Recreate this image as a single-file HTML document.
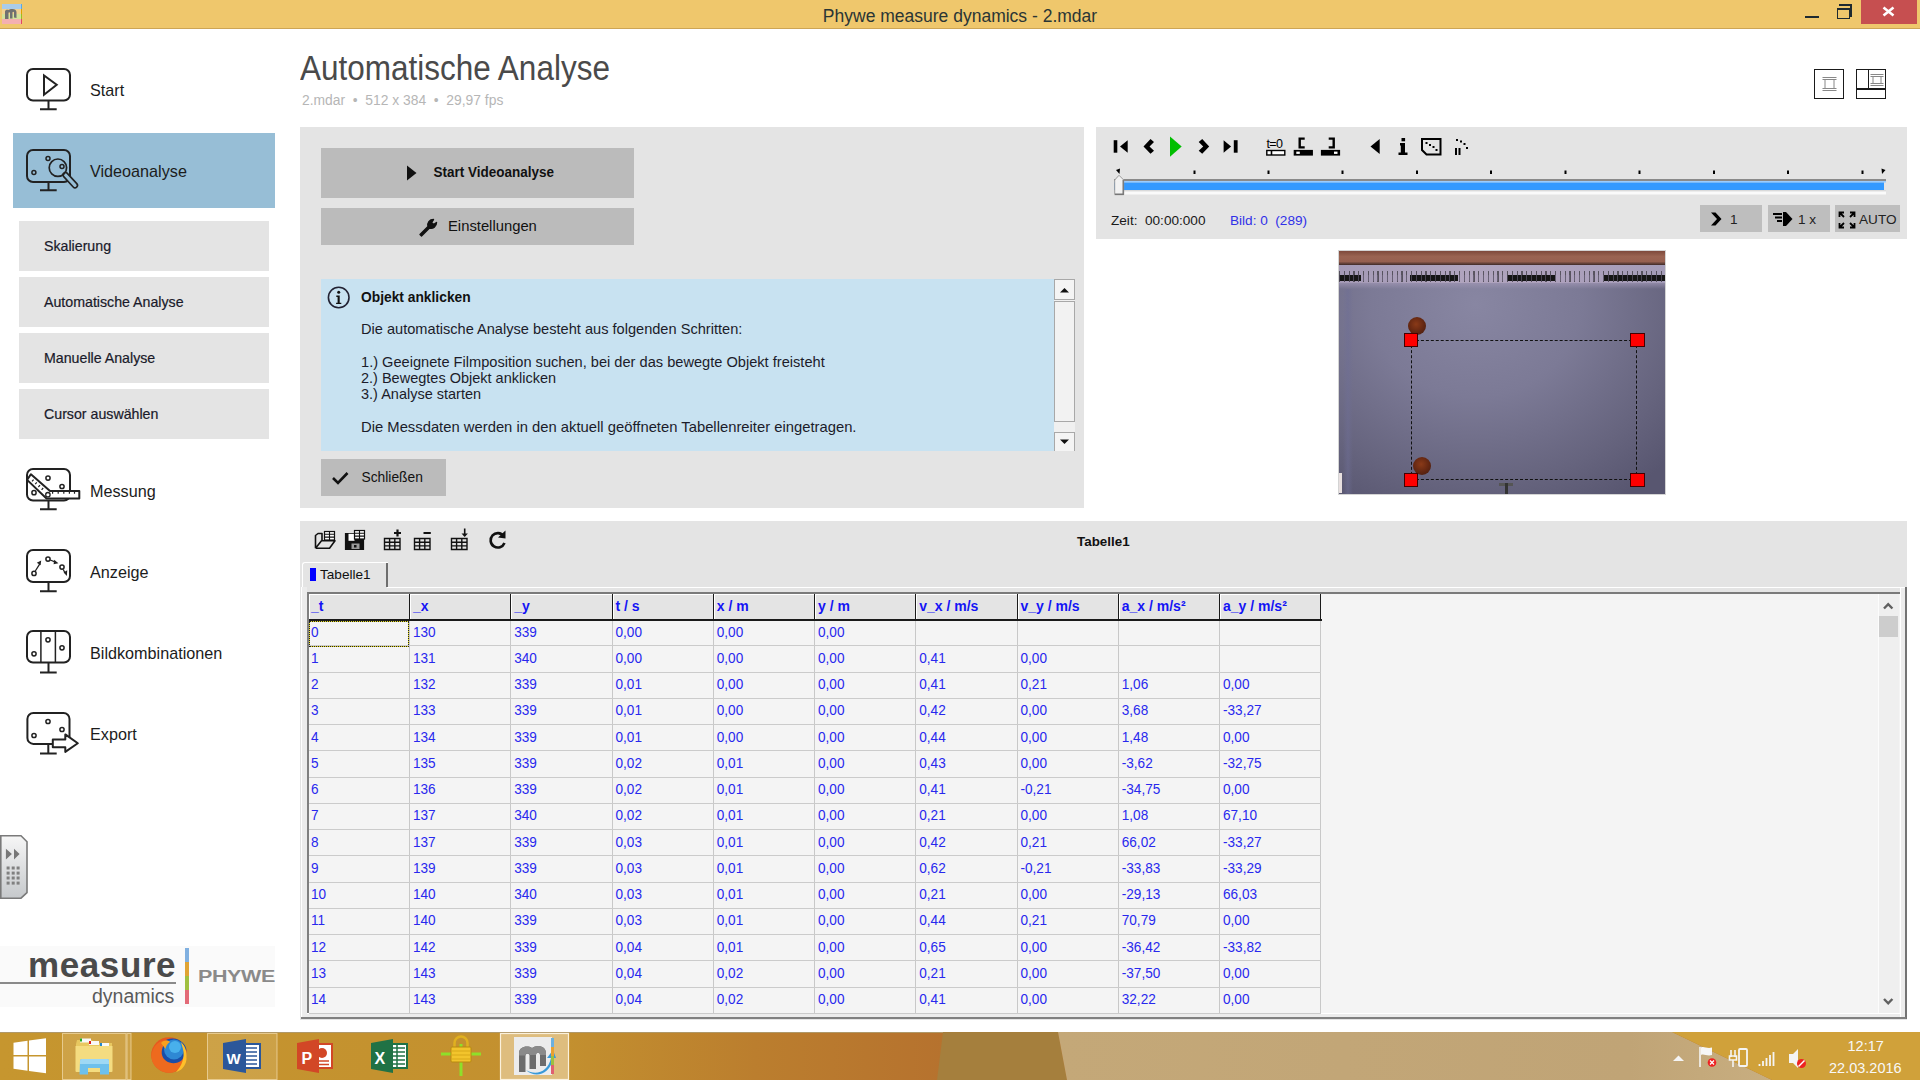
<!DOCTYPE html>
<html><head><meta charset="utf-8">
<style>
*{margin:0;padding:0;box-sizing:border-box}
html,body{width:1920px;height:1080px;overflow:hidden;background:#fff;font-family:"Liberation Sans",sans-serif;color:#1a1a1a}
.a{position:absolute;white-space:nowrap;line-height:1}
svg{position:absolute;overflow:visible}
#title{left:0;top:0;width:1920px;height:29px;background:#EFC76C;border-bottom:1px solid #CDA555}
.nl{left:90px;font-size:16.2px;color:#1c1c1c}
.sub{left:19px;width:250px;height:50px;background:#E4E4E4}
.sub span{position:absolute;left:25px;top:18px;font-size:14.2px;color:#1a1a2a;line-height:1;-webkit-text-stroke:0.2px #1a1a2a}
.panel{background:#E4E4E4}
.btn{background:#BBBBBB}
.it{left:361px;font-size:14.5px;color:#1c1c2a}
.th{top:594px;height:25px;background:#E4E4E4;border-top:1px solid #fff;border-left:1px solid #fff}
.tht{top:598.5px;font-size:14px;font-weight:bold;color:#1414F5}
.td{font-size:13.6px;color:#2828EE;transform:scaleY(1.11);transform-origin:0 100%}
.vl{top:621px;width:1px;height:392px;background:#C8C8C8}
.hl{left:309px;width:1012px;height:1px;background:#CBCBCB}
.tb{position:absolute;background:#BEBEBE;height:27px;top:205px}
</style></head><body>
<!-- TITLE BAR -->
<div id="title" class="a"></div>
<div class="a" style="left:2px;top:4px;width:20px;height:20px;background:linear-gradient(#AACCEA 0 25%,#F2D292 25% 50%,#D4E29A 50% 75%,#F4B0B0 75%)"></div>
<div class="a" style="left:20.5px;top:4px;width:1.5px;height:20px;background:linear-gradient(#5AAAE0 0 25%,#E0A000 25% 50%,#98C020 50% 75%,#E04860 75%)"></div>
<svg style="left:4px;top:8px" width="14" height="12" viewBox="0 0 14 12"><path d="M1 11 V3.5 C1 2 3 1.5 4.5 2 L6 1.3 C9 0.5 12.5 1 12.5 4 V10 L10 9.5 V4.5 C10 3.5 8.5 3.5 8.5 4.5 V10.5 L6 10.5 V5 C6 4 4.5 4 4.5 5 V11 Z" fill="#707070"/></svg>
<div class="a" style="left:0;width:1920px;top:8px;text-align:center;font-size:17.5px;color:#2a3535">Phywe measure dynamics - 2.mdar</div>
<div class="a" style="left:1805px;top:16px;width:14px;height:2px;background:#1e2a30"></div>
<div class="a" style="left:1839px;top:4px;width:13px;height:13px;border:2px solid #1e2a30;border-width:2px 2px 0 0"></div>
<div class="a" style="left:1837px;top:8px;width:13px;height:11px;border:1.5px solid #1e2a30;border-top-width:2.5px"></div>
<div class="a" style="left:1861px;top:0;width:56px;height:24px;background:#C64F50"></div>
<svg style="left:1861px;top:0" width="56" height="24" viewBox="0 0 56 24"><path d="M22.5 7.5 L32.5 15.5 M32.5 7.5 L22.5 15.5" stroke="#fff" stroke-width="2.6"/></svg>

<!-- SIDEBAR -->
<div class="a" style="left:12.5px;top:133px;width:262.5px;height:75px;background:#97BED6"></div>
<svg style="left:20px;top:59.8px" width="70" height="55" viewBox="0 0 70 55" fill="none" stroke="#222" stroke-width="2">
 <rect x="7" y="9" width="43" height="31.5" rx="6"/><path d="M28.5 41v8.2M20 49.2h16.7"/>
 <path d="M24 15.4 L24 34.7 L36.7 24.8 Z" stroke-linejoin="miter"/>
</svg>
<div class="a nl" style="top:82.2px">Start</div>

<svg style="left:20px;top:141.2px" width="70" height="55" viewBox="0 0 70 55" fill="none" stroke="#222" stroke-width="2">
 <rect x="7" y="9" width="43" height="32" rx="6"/><path d="M28.5 41v8.2M20 49.2h16.7"/>
 <g stroke-width="1.5"><circle cx="13.9" cy="31.6" r="2"/><circle cx="28" cy="17.5" r="2"/><circle cx="42" cy="25.5" r="2"/></g>
 <line x1="45.5" y1="34" x2="55" y2="44.3" stroke-width="6.5" stroke-linecap="round"/>
 <line x1="45.5" y1="34" x2="55" y2="44.3" stroke="#97BED6" stroke-width="3.2" stroke-linecap="round"/>
 <circle cx="37.9" cy="26.7" r="8.7" stroke-width="1.7"/>
</svg>
<div class="a nl" style="top:163.2px">Videoanalyse</div>

<div class="a sub" style="top:220.5px"><span>Skalierung</span></div>
<div class="a sub" style="top:276.8px"><span>Automatische Analyse</span></div>
<div class="a sub" style="top:333px"><span>Manuelle Analyse</span></div>
<div class="a sub" style="top:389.3px"><span>Cursor auswählen</span></div>

<svg style="left:20px;top:459.7px" width="70" height="55" viewBox="0 0 70 55" fill="none" stroke="#222" stroke-width="2">
 <rect x="7" y="9" width="43" height="31.5" rx="6"/><path d="M28.5 41v8.2M20 49.2h16.7"/>
 <g stroke-width="1.5"><circle cx="14" cy="32.7" r="2.1"/><circle cx="28" cy="18.1" r="2.1"/><circle cx="42" cy="26.5" r="2.1"/></g>
 <path d="M10.9 14.3 L30 31.1 L59.3 31.1 L59.3 38.5 L26.5 38.5 L7.1 19.9 Z" fill="#fff" stroke-linejoin="round"/>
 <path d="M13.6 19.6l-1.6 1.8M16.8 22.4l-1.6 1.8M20 25.2l-1.6 1.8M23.2 28l-1.6 1.8M32.6 31.1v2.6M38.2 31.1v2.6M43.8 31.1v2.6M49.4 31.1v2.6M54.5 31.1v2.6" stroke-width="1.2"/>
 <circle cx="27.9" cy="34.7" r="2.2" stroke-width="1.3"/>
</svg>
<div class="a nl" style="top:482.8px">Messung</div>

<svg style="left:20px;top:541.2px" width="70" height="55" viewBox="0 0 70 55" fill="none" stroke="#222" stroke-width="2">
 <rect x="7" y="9" width="43" height="32" rx="6"/><path d="M28.5 41v9M20 50.2h16.7"/>
 <g stroke-width="1.5"><circle cx="14" cy="32.4" r="2.1"/><circle cx="28" cy="18.1" r="2.1"/><circle cx="42" cy="26.1" r="2.1"/></g>
 <path d="M15.3 30 L19.8 22.8 M30.2 19 L35.5 21.2 M43.3 28.5 L45 32" stroke-width="1.3"/>
 <path d="M16.8 21.8 L21.2 19.4 L20.6 24.3 Z M34.2 18.8 L38.4 22.2 L33.6 23.3 Z M43.6 31.6 L47.2 29.2 L46.9 34.9 Z" fill="#222" stroke="none"/>
</svg>
<div class="a nl" style="top:563.8px">Anzeige</div>

<svg style="left:20px;top:622.4px" width="70" height="55" viewBox="0 0 70 55" fill="none" stroke="#222" stroke-width="2">
 <rect x="7" y="9" width="43" height="31.5" rx="6"/><path d="M28.5 41v9.5M20 50.5h16.7"/>
 <path d="M20.9 9.5v31M35.4 9.5v31" stroke-width="1.5"/>
 <g stroke-width="1.5"><circle cx="14" cy="31.8" r="2.1"/><circle cx="28" cy="17.8" r="2.1"/><circle cx="42" cy="25.8" r="2.1"/></g>
</svg>
<div class="a nl" style="top:644.8px">Bildkombinationen</div>

<svg style="left:20px;top:703.5px" width="70" height="55" viewBox="0 0 70 55" fill="none" stroke="#222" stroke-width="2">
 <rect x="7.4" y="9" width="42.1" height="30.9" rx="6"/><path d="M28.3 40v9.5M20 49.5h16.7"/>
 <g stroke-width="1.5"><circle cx="14" cy="31.5" r="2.1"/><circle cx="28" cy="17.5" r="2.1"/><circle cx="42" cy="25.5" r="2.1"/></g>
 <path d="M32.8 35.4 H45.3 V30.4 L57.8 39.3 L45.3 47.9 V43.2 H32.8 Z" fill="#fff" stroke-linejoin="round"/>
</svg>
<div class="a nl" style="top:725.8px">Export</div>

<!-- sidebar handle -->
<svg style="left:0;top:834px" width="30" height="66" viewBox="0 834 30 66">
 <defs><linearGradient id="hg" x1="0" x2="0" y1="0" y2="1"><stop offset="0" stop-color="#F6F6F6"/><stop offset="1" stop-color="#C6C9CC"/></linearGradient></defs>
 <path d="M0.8 835.8 H21 L27 841.8 V892.6 L21 898.2 H0.8 Z" fill="url(#hg)" stroke="#7A7A7A" stroke-width="1.6"/>
 <path d="M5.9 848.7 L11.9 854 L5.9 859.4 Z M14 848.7 L19.6 854 L14 859.4 Z" fill="#777"/>
 <g fill="#808080"><rect x="6.6" y="866.5" width="3" height="3"/><rect x="11.7" y="866.5" width="3" height="3"/><rect x="16.6" y="866.5" width="3" height="3"/>
 <rect x="6.6" y="871.6" width="3" height="3"/><rect x="11.7" y="871.6" width="3" height="3"/><rect x="16.6" y="871.6" width="3" height="3"/>
 <rect x="6.6" y="876.5" width="3" height="3"/><rect x="11.7" y="876.5" width="3" height="3"/><rect x="16.6" y="876.5" width="3" height="3"/>
 <rect x="6.6" y="881.6" width="3" height="3"/><rect x="11.7" y="881.6" width="3" height="3"/><rect x="16.6" y="881.6" width="3" height="3"/></g>
</svg>

<!-- logo -->
<div class="a" style="left:0;top:946px;width:275px;height:61px;background:#FAFAFA"></div>
<div class="a" style="left:28px;top:946.5px;font-size:35px;font-weight:bold;color:#4a4a4a;letter-spacing:0.6px">measure</div>
<div class="a" style="left:0;top:982px;width:176px;height:1.5px;background:#8a8a8a"></div>
<div class="a" style="left:92px;top:987px;font-size:19.5px;color:#5a5a5a">dynamics</div>
<div class="a" style="left:184.5px;top:948px;width:4px;height:14px;background:#80B0E0"></div>
<div class="a" style="left:184.5px;top:962px;width:4px;height:14px;background:#E0A434"></div>
<div class="a" style="left:184.5px;top:976px;width:4px;height:14px;background:#A0C040"></div>
<div class="a" style="left:184.5px;top:990px;width:4px;height:13.5px;background:#E36B78"></div>
<div class="a" style="left:198px;top:967.5px;font-size:21.5px;font-weight:bold;color:#8a8a8a;transform:scaleY(0.8);transform-origin:0 0;letter-spacing:-0.4px">PHYWE</div>

<!-- HEADER -->
<div class="a" style="left:300px;top:54px;font-size:31.5px;color:#4a4a4a;transform:scaleY(1.1);transform-origin:0 26.7px">Automatische Analyse</div>
<div class="a" style="left:302px;top:94px;font-size:13.85px;color:#B6B6B6">2.mdar &nbsp;•&nbsp; 512 x 384 &nbsp;•&nbsp; 29,97 fps</div>
<!-- layout icons -->
<div class="a" style="left:1814px;top:69.3px;width:30px;height:29.5px;border:1.6px solid #1a1a1a"></div>
<svg style="left:1820px;top:75px" width="20" height="18" viewBox="0 0 20 18" fill="none" stroke="#888" stroke-width="1">
 <path d="M2.5 2.5h14M2.5 4.5h14M2.5 13.5h14M2.5 15.5h14M5 4.5v9M14 4.5v9"/>
</svg>
<div class="a" style="left:1856px;top:69.3px;width:30px;height:29.5px;border:1.6px solid #1a1a1a"></div>
<div class="a" style="left:1867.5px;top:70px;width:1.6px;height:19px;background:#1a1a1a"></div>
<div class="a" style="left:1857px;top:88px;width:28px;height:1.6px;background:#1a1a1a"></div>
<svg style="left:1869px;top:72px" width="16" height="16" viewBox="0 0 16 16" fill="none" stroke="#888" stroke-width="1">
 <path d="M1.5 2.5h13M1.5 4.5h13M1.5 11.5h13M1.5 13.5h13M4 4.5v7M12 4.5v7"/>
</svg>

<!-- LEFT PANEL -->
<div class="a panel" style="left:300px;top:127px;width:784px;height:381px"></div>
<div class="a btn" style="left:321px;top:148px;width:313px;height:49.5px"></div>
<svg style="left:405px;top:164px" width="14" height="18" viewBox="0 0 14 18"><path d="M2 1.5 L11.5 9 L2 16.5 Z" fill="#111"/></svg>
<div class="a" style="left:433.5px;top:166.3px;font-size:13.5px;font-weight:bold;color:#111;transform:scaleY(1.1);transform-origin:0 11.4px">Start Videoanalyse</div>
<div class="a btn" style="left:321px;top:208px;width:313px;height:37px"></div>
<svg style="left:417px;top:216px" width="22" height="22" viewBox="0 0 22 22"><path d="M3 18.5 L11 10.5 C10 7 12.5 3.5 16.5 3.5 L14.5 6.5 L16.5 8.5 L19.5 6.5 C19.5 10.5 16 13 12.5 12 L4.5 20 Z" fill="#111" stroke="#111" stroke-width="1.4" stroke-linejoin="round"/></svg>
<div class="a" style="left:448px;top:219px;font-size:14.8px;color:#111">Einstellungen</div>

<div class="a" style="left:321px;top:279px;width:733px;height:172px;background:#C8E2F1"></div>
<div class="a" style="left:1054px;top:279px;width:21px;height:172px;background:#F0F0F0"></div>
<div class="a" style="left:1054px;top:279px;width:21px;height:21px;background:#F4F4F4;border:1px solid #A8A8A8"></div>
<svg style="left:1054px;top:279px" width="21" height="21"><path d="M6 13.5 L10.5 9 L15 13.5 Z" fill="#111"/></svg>
<div class="a" style="left:1054px;top:301px;width:21px;height:121px;background:#F2F2F2;border:1px solid #A8A8A8"></div>
<div class="a" style="left:1054px;top:432px;width:21px;height:19px;background:#F4F4F4;border:1px solid #A8A8A8;border-bottom:none"></div>
<svg style="left:1054px;top:432px" width="21" height="19"><path d="M6 7.5 L10.5 12 L15 7.5 Z" fill="#111"/></svg>

<svg style="left:326px;top:285px" width="26" height="26" viewBox="0 0 26 26">
 <circle cx="12.7" cy="12.5" r="10.3" fill="none" stroke="#223" stroke-width="1.6"/>
 <circle cx="12.7" cy="7.2" r="1.5" fill="#111"/>
 <path d="M10.3 10.5h3.4v7.2h1.6v1.4h-5.2v-1.4h1.5v-5.8h-1.3z" fill="#111"/>
</svg>
<div class="a" style="left:361px;top:291px;font-size:13.8px;font-weight:bold;color:#111">Objekt anklicken</div>
<div class="a it" style="top:322px;font-size:14.6px">Die automatische Analyse besteht aus folgenden Schritten:</div>
<div class="a it" style="top:354.8px;font-size:14.62px">1.) Geeignete Filmposition suchen, bei der das bewegte Objekt freisteht</div>
<div class="a it" style="top:371px">2.) Bewegtes Objekt anklicken</div>
<div class="a it" style="top:387px">3.) Analyse starten</div>
<div class="a it" style="top:419.6px;font-size:14.8px">Die Messdaten werden in den aktuell geöffneten Tabellenreiter eingetragen.</div>

<div class="a btn" style="left:321px;top:459px;width:125px;height:37px"></div>
<svg style="left:330px;top:469px" width="22" height="18" viewBox="0 0 22 18"><path d="M3 9 L8 14 L17.5 4" fill="none" stroke="#111" stroke-width="2.6"/></svg>
<div class="a" style="left:361.5px;top:471px;font-size:13.8px;color:#111">Schließen</div>

<!-- VIDEO CONTROL PANEL -->
<div class="a panel" style="left:1096px;top:127px;width:811px;height:111.5px"></div>
<svg style="left:1096px;top:127px" width="811" height="111" viewBox="1096 127 811 111">
 <g fill="#000">
  <rect x="1113.7" y="140.2" width="3.6" height="12.5"/><path d="M1120 146.4 L1127.7 140.2 L1127.7 152.7 Z"/>
  <path d="M1143.5 146.4 L1150.5 139 L1154 142 L1149.5 146.4 L1154 150.8 L1150.5 153.8 Z"/>
  <path d="M1170 136.4 L1181.7 146.6 L1170 156.8 Z" fill="#00BE00"/>
  <path d="M1209.2 146.4 L1202.2 139 L1198.7 142 L1203.2 146.4 L1198.7 150.8 L1202.2 153.8 Z"/>
  <path d="M1231.1 146.4 L1223.6 140.2 L1223.6 152.7 Z"/><rect x="1233.8" y="140.2" width="3.8" height="12.5"/>
  <path d="M1379.7 139 L1379.7 154 L1370.5 146.5 Z"/>
 </g>
 <text x="1266.5" y="147.8" font-size="12.5" font-family="Liberation Sans" fill="#000" letter-spacing="-0.6">t=0</text>
 <rect x="1266.8" y="150.5" width="18" height="4.5" fill="#fff" stroke="#000" stroke-width="1.4"/><path d="M1271.5 150.5v4.5" stroke="#000" stroke-width="1.6"/>
 <path d="M1304.7 138.6h-5v8.8h5" fill="none" stroke="#000" stroke-width="2.4"/>
 <rect x="1294.3" y="150.5" width="18" height="4.5" fill="#000" stroke="#000" stroke-width="1.2"/><rect x="1296.3" y="151.6" width="3.5" height="2.3" fill="#fff"/>
 <path d="M1328.7 138.6h5v8.8h-5" fill="none" stroke="#000" stroke-width="2.4"/>
 <rect x="1321.5" y="150.5" width="18" height="4.5" fill="#000" stroke="#000" stroke-width="1.2"/><rect x="1334" y="151.6" width="3.5" height="2.3" fill="#fff"/>
 <path d="M1400 143 h5 v9.5 h2.5 v2.5 h-9 v-2.5 h2.3 v-7 h-0.8z" fill="#000"/><rect x="1401.5" y="138" width="3.6" height="3.3" fill="#000"/>
 <path d="M1422 139 H1440.5 V154.5 H1426.5 L1422 150 Z" fill="none" stroke="#000" stroke-width="2"/>
 <g fill="#000"><rect x="1425.5" y="142" width="2" height="2"/><rect x="1429" y="144" width="2" height="2"/><rect x="1432.5" y="146" width="2" height="2"/><rect x="1435.5" y="149" width="2" height="2"/></g>
 <g fill="#000"><rect x="1455" y="148" width="2" height="7"/><rect x="1458.5" y="148" width="2" height="7"/><rect x="1456" y="139" width="2" height="2"/><rect x="1460" y="140.5" width="2" height="2"/><rect x="1463.5" y="143" width="2" height="2"/><rect x="1466" y="147" width="2" height="2"/></g>
 <!-- slider -->
 <rect x="1114" y="179" width="772" height="2" fill="#8A8A8A"/>
 <rect x="1114" y="181" width="772" height="1.5" fill="#9ACCFF"/>
 <rect x="1114" y="182.5" width="770" height="7.5" fill="#3399FF"/>
 <rect x="1114" y="190" width="772" height="1.5" fill="#DADADA"/>
 <rect x="1114" y="191.5" width="772" height="3" fill="#FAFAFA"/>
 <g fill="#000">
  <rect x="1193.5" y="170.5" width="2" height="3.5"/><rect x="1267.5" y="170.5" width="2" height="3.5"/><rect x="1341.5" y="170.5" width="2" height="3.5"/>
  <rect x="1416" y="170.5" width="2" height="3.5"/><rect x="1490" y="170.5" width="2" height="3.5"/><rect x="1564.5" y="170.5" width="2" height="3.5"/>
  <rect x="1638.5" y="170.5" width="2" height="3.5"/><rect x="1713" y="170.5" width="2" height="3.5"/><rect x="1787" y="170.5" width="2" height="3.5"/><rect x="1861.5" y="170.5" width="2" height="3.5"/>
  <path d="M1116 170 L1120 168.5 L1119.5 174 Z"/><path d="M1885.5 170 L1881.5 168.5 L1882 174 Z"/>
 </g>
 <path d="M1114.7 194.7 V180 L1119 175.3 L1123.7 180 V194.7 Z" fill="#F2F2F2" stroke="#9A9A9A" stroke-width="1"/>
 <path d="M1123.2 180 V194.2 H1115" fill="none" stroke="#777" stroke-width="1.4"/>
</svg>
<div class="a" style="left:1111px;top:213.5px;font-size:13.6px;color:#1a1a1a">Zeit:&nbsp; 00:00:000</div>
<div class="a" style="left:1230px;top:213.5px;font-size:13.6px;color:#3030E8">Bild: 0&nbsp; (289)</div>
<div class="tb" style="left:1700px;width:62px"></div>
<svg style="left:1708px;top:209px" width="18" height="20"><path d="M3 3.5 L7.5 3.5 L13.5 10 L7.5 16.5 L3 16.5 L9 10 Z" fill="#000"/></svg>
<div class="a" style="left:1730px;top:212.5px;font-size:13.6px;color:#222">1</div>
<div class="tb" style="left:1767.5px;width:62px"></div>
<svg style="left:1772px;top:209px" width="24" height="20"><path d="M1 5h9M3 8.5h7M5 12h5" stroke="#000" stroke-width="2"/><path d="M11 3 L14 3 L20.5 10 L14 17 L11 17 Z" fill="#000"/></svg>
<div class="a" style="left:1798px;top:212.5px;font-size:13.6px;color:#222">1 x</div>
<div class="tb" style="left:1835px;width:65px"></div>
<svg style="left:1838px;top:211px" width="18" height="18" viewBox="0 0 18 18" fill="none" stroke="#000" stroke-width="1.8"><path d="M1.5 6V1.5H6M1.5 1.5l4.5 4.5M16.5 6V1.5H12M16.5 1.5L12 6M1.5 12v4.5H6M1.5 16.5L6 12M16.5 12v4.5H12M16.5 16.5L12 12"/></svg>
<div class="a" style="left:1859px;top:212.5px;font-size:13.6px;color:#222">AUTO</div>

<!-- VIDEO -->
<div class="a" style="left:1337.5px;top:249.5px;width:328.5px;height:245.5px;border:1px solid #D4D4D4;overflow:hidden;background:radial-gradient(ellipse 80% 95% at 42% 22%,#8886A2 0%,#7C7A96 40%,#66647E 78%,#585670 100%)">
 <div class="a" style="left:0;top:0;width:328px;height:14.5px;background:linear-gradient(#7E4A3C,#9A6452 40%,#966050 75%,#3E2A28)"></div>
 <div class="a" style="left:0;top:14.5px;width:328px;height:18px;background:linear-gradient(90deg,#A49AB6,#B0A4BE 40%,#ACA0BC 70%,#A49CB8)"></div>
 <div class="a" style="left:0;top:32px;width:328px;height:6px;background:linear-gradient(rgba(160,150,180,0.7),rgba(120,116,144,0))"></div>
 <div class="a" style="left:0;top:20px;width:328px;height:11px;background:repeating-linear-gradient(90deg,rgba(20,20,20,0.55) 0 1.2px,transparent 1.2px 4.8px)"></div>
 <div class="a" style="left:0;top:24px;width:328px;height:6.5px;background:repeating-linear-gradient(90deg,#151515 0 48px,transparent 48px 97px);background-position:-26px 0"></div><div class="a" style="left:0;top:24px;width:328px;height:6.5px;background:repeating-linear-gradient(90deg,rgba(120,110,140,0.5) 0 1px,transparent 1px 4.8px)"></div>
 <div class="a" style="left:4px;top:38px;width:10px;height:207px;background:linear-gradient(90deg,rgba(100,100,140,0),rgba(110,110,150,0.5),rgba(100,100,140,0))"></div>
 <div class="a" style="left:69px;top:66px;width:18px;height:18px;border-radius:50%;background:radial-gradient(circle at 45% 40%,#8A3A18,#5E2410 60%,#3E2018 100%)"></div>
 <div class="a" style="left:74px;top:206px;width:18px;height:18px;border-radius:50%;background:radial-gradient(circle at 45% 40%,#8A3A18,#5E2410 60%,#3E2018 100%)"></div>
 <div class="a" style="left:160px;top:232px;width:14px;height:3px;background:#555"></div>
 <div class="a" style="left:166px;top:232px;width:3px;height:14px;background:#333"></div>
 <div class="a" style="left:0;top:222px;width:3px;height:20px;background:#E8E0E0"></div>
 <div class="a" style="left:72.5px;top:89px;width:226px;height:140px;border:1px dashed #111"></div>
 <div class="a" style="left:65px;top:82px;width:14.5px;height:14.5px;background:#F00;border:1px solid #400"></div>
 <div class="a" style="left:291.5px;top:82px;width:14.5px;height:14.5px;background:#F00;border:1px solid #400"></div>
 <div class="a" style="left:65px;top:222px;width:14.5px;height:14.5px;background:#F00;border:1px solid #400"></div>
 <div class="a" style="left:291.5px;top:222px;width:14.5px;height:14.5px;background:#F00;border:1px solid #400"></div>
</div>

<!-- TABLE PANEL -->
<div class="a panel" style="left:300px;top:520.5px;width:1607px;height:499.5px"></div>
<svg style="left:300px;top:520px" width="220" height="40" viewBox="300 520 220 40" fill="none" stroke="#111" stroke-width="1.6">
 <path d="M315.5 548.2 V535.5 L318 533.5 H322 V540.5 M315.5 548.2 H329.5 L335 540.8 H321.5 L315.5 548.2" stroke-linejoin="round"/>
 <rect x="324.5" y="531.5" width="10" height="8.5" fill="#fff" stroke-width="1.2"/><path d="M324.5 534.3h10M324.5 537.1h10M329.5 531.5v8.5" stroke-width="1.1"/>
 <path d="M345.5 533.5 H360 L363.5 537 V549.5 H345.5 Z" fill="#111" stroke-width="1.2"/><rect x="348.5" y="533.8" width="6" height="7" fill="#fff" stroke="none"/><rect x="351.5" y="543.5" width="8" height="5.5" fill="#999" stroke="none"/><rect x="354" y="545" width="2.5" height="2.5" fill="#111" stroke="none"/>
 <rect x="354.5" y="530.5" width="10" height="8.5" fill="#fff" stroke-width="1.2"/><path d="M354.5 533.3h10M354.5 536.1h10M359.5 530.5v8.5" stroke-width="1.1"/>
 <g stroke-width="1.4"><path d="M384.5 538.5h15.5v11h-15.5zM384.5 542.2h15.5M384.5 545.9h15.5M389.6 538.5v11M394.8 538.5v11"/>
 <path d="M414.5 538.5h15.5v11h-15.5zM414.5 542.2h15.5M414.5 545.9h15.5M419.6 538.5v11M424.8 538.5v11"/>
 <path d="M451.5 538.5h15.5v11h-15.5zM451.5 542.2h15.5M451.5 545.9h15.5M456.6 538.5v11M461.8 538.5v11"/></g>
 <path d="M394 533h7M397.5 529.5v7M423.5 533h7.3" stroke-width="2.2"/>
 <path d="M464.7 528.5v7" stroke-width="1.6"/><path d="M461.5 533.5 L464.7 537 L467.9 533.5 Z" fill="#111" stroke="none"/>
 <path d="M503.6 536 A7.2 7.2 0 1 0 504.5 543" stroke-width="2.6"/><path d="M505.5 530.5 L505.5 538.5 L498 537.5 Z" fill="#111" stroke="none"/>
</svg>
<div class="a" style="left:1077px;top:535px;font-size:13.4px;font-weight:bold;color:#111">Tabelle1</div>

<!-- tab -->
<div class="a" style="left:301.5px;top:562px;width:86px;height:26px;background:#E4E4E4;border-top:1.5px solid #fff;border-left:1.5px solid #fff;border-radius:3px 0 0 0"></div>
<div class="a" style="left:385.5px;top:563px;width:2px;height:24px;background:#6E6E6E"></div>
<div class="a" style="left:310px;top:568px;width:6px;height:12.5px;background:#0000FF"></div>
<div class="a" style="left:320px;top:568px;font-size:13.6px;color:#111">Tabelle1</div>
<!-- grid frame -->
<div class="a" style="left:387px;top:586.5px;width:1519px;height:1.5px;background:#fff"></div>
<div class="a" style="left:301px;top:587px;width:6px;height:432px;background:#ECECEC;border-left:1px solid #fff"></div>
<div class="a" style="left:1904.5px;top:587px;width:2px;height:431.5px;background:#737373"></div>
<div class="a" style="left:301px;top:1016.5px;width:1605px;height:2px;background:#808080"></div>
<div class="a" style="left:307px;top:1012.5px;width:1598px;height:4.5px;background:#ECECEC;border-top:1px solid #fff"></div>
<div class="a" style="left:1900px;top:588px;width:4.5px;height:429px;background:#ECECEC;border-left:1px solid #fff"></div>
<div class="a" style="left:307px;top:592px;width:1593px;height:421px;background:#F4F4F4;border-top:2px solid #7A7A7A;border-left:2px solid #808080"></div>
<!-- scrollbar -->
<div class="a" style="left:1878px;top:594px;width:21px;height:418.5px;background:#EFEFEF;border-left:1px solid #FCFCFC"></div>
<div class="a" style="left:1879px;top:615.5px;width:18.5px;height:21.5px;background:#CDCDCD"></div>
<svg style="left:1878px;top:594px" width="21" height="419"><path d="M6 14.5 L10.2 10.2 L14.4 14.5" fill="none" stroke="#606060" stroke-width="2.4"/><path d="M6 405 L10.2 409.3 L14.4 405" fill="none" stroke="#606060" stroke-width="2.4"/></svg>
<!-- dotted focus cell -->
<div class="a" style="left:309px;top:621px;width:99.5px;height:25.5px;border:1.6px solid #E8DC20"></div><div class="a" style="left:309px;top:621px;width:99.5px;height:25.5px;border:1.6px dotted #222"></div>
<div class="a th" style="left:309.00px;width:100.00px"></div>
<div class="a tht" style="left:311.00px">_t</div>
<div class="a th" style="left:410.00px;width:101.25px"></div>
<div class="a tht" style="left:413.00px">_x</div>
<div class="a th" style="left:511.25px;width:101.25px"></div>
<div class="a tht" style="left:514.25px">_y</div>
<div class="a th" style="left:612.50px;width:101.25px"></div>
<div class="a tht" style="left:615.50px">t / s</div>
<div class="a th" style="left:713.75px;width:101.25px"></div>
<div class="a tht" style="left:716.75px">x / m</div>
<div class="a th" style="left:815.00px;width:101.25px"></div>
<div class="a tht" style="left:818.00px">y / m</div>
<div class="a th" style="left:916.25px;width:101.25px"></div>
<div class="a tht" style="left:919.25px">v_x / m/s</div>
<div class="a th" style="left:1017.50px;width:101.25px"></div>
<div class="a tht" style="left:1020.50px">v_y / m/s</div>
<div class="a th" style="left:1118.75px;width:101.25px"></div>
<div class="a tht" style="left:1121.75px">a_x / m/s&#178;</div>
<div class="a th" style="left:1220.00px;width:101.25px"></div>
<div class="a tht" style="left:1223.00px">a_y / m/s&#178;</div>
<div class="a" style="left:309px;top:619px;width:1013px;height:1.6px;background:#1a1a1a"></div>
<div class="a" style="left:409.00px;top:594px;width:1px;height:25px;background:#1a1a1a"></div>
<div class="a vl" style="left:409.00px"></div>
<div class="a" style="left:510.25px;top:594px;width:1px;height:25px;background:#1a1a1a"></div>
<div class="a vl" style="left:510.25px"></div>
<div class="a" style="left:611.50px;top:594px;width:1px;height:25px;background:#1a1a1a"></div>
<div class="a vl" style="left:611.50px"></div>
<div class="a" style="left:712.75px;top:594px;width:1px;height:25px;background:#1a1a1a"></div>
<div class="a vl" style="left:712.75px"></div>
<div class="a" style="left:814.00px;top:594px;width:1px;height:25px;background:#1a1a1a"></div>
<div class="a vl" style="left:814.00px"></div>
<div class="a" style="left:915.25px;top:594px;width:1px;height:25px;background:#1a1a1a"></div>
<div class="a vl" style="left:915.25px"></div>
<div class="a" style="left:1016.50px;top:594px;width:1px;height:25px;background:#1a1a1a"></div>
<div class="a vl" style="left:1016.50px"></div>
<div class="a" style="left:1117.75px;top:594px;width:1px;height:25px;background:#1a1a1a"></div>
<div class="a vl" style="left:1117.75px"></div>
<div class="a" style="left:1219.00px;top:594px;width:1px;height:25px;background:#1a1a1a"></div>
<div class="a vl" style="left:1219.00px"></div>
<div class="a" style="left:1320.25px;top:594px;width:1px;height:25px;background:#1a1a1a"></div>
<div class="a vl" style="left:1320.25px"></div>
<div class="a hl" style="top:645.25px"></div>
<div class="a hl" style="top:671.50px"></div>
<div class="a hl" style="top:697.75px"></div>
<div class="a hl" style="top:724.00px"></div>
<div class="a hl" style="top:750.25px"></div>
<div class="a hl" style="top:776.50px"></div>
<div class="a hl" style="top:802.75px"></div>
<div class="a hl" style="top:829.00px"></div>
<div class="a hl" style="top:855.25px"></div>
<div class="a hl" style="top:881.50px"></div>
<div class="a hl" style="top:907.75px"></div>
<div class="a hl" style="top:934.00px"></div>
<div class="a hl" style="top:960.25px"></div>
<div class="a hl" style="top:986.50px"></div>
<div class="a hl" style="top:1012.75px"></div>
<div class="a td" style="left:311.00px;top:625.50px">0</div>
<div class="a td" style="left:413.00px;top:625.50px">130</div>
<div class="a td" style="left:514.25px;top:625.50px">339</div>
<div class="a td" style="left:615.50px;top:625.50px">0,00</div>
<div class="a td" style="left:716.75px;top:625.50px">0,00</div>
<div class="a td" style="left:818.00px;top:625.50px">0,00</div>
<div class="a td" style="left:311.00px;top:651.75px">1</div>
<div class="a td" style="left:413.00px;top:651.75px">131</div>
<div class="a td" style="left:514.25px;top:651.75px">340</div>
<div class="a td" style="left:615.50px;top:651.75px">0,00</div>
<div class="a td" style="left:716.75px;top:651.75px">0,00</div>
<div class="a td" style="left:818.00px;top:651.75px">0,00</div>
<div class="a td" style="left:919.25px;top:651.75px">0,41</div>
<div class="a td" style="left:1020.50px;top:651.75px">0,00</div>
<div class="a td" style="left:311.00px;top:678.00px">2</div>
<div class="a td" style="left:413.00px;top:678.00px">132</div>
<div class="a td" style="left:514.25px;top:678.00px">339</div>
<div class="a td" style="left:615.50px;top:678.00px">0,01</div>
<div class="a td" style="left:716.75px;top:678.00px">0,00</div>
<div class="a td" style="left:818.00px;top:678.00px">0,00</div>
<div class="a td" style="left:919.25px;top:678.00px">0,41</div>
<div class="a td" style="left:1020.50px;top:678.00px">0,21</div>
<div class="a td" style="left:1121.75px;top:678.00px">1,06</div>
<div class="a td" style="left:1223.00px;top:678.00px">0,00</div>
<div class="a td" style="left:311.00px;top:704.25px">3</div>
<div class="a td" style="left:413.00px;top:704.25px">133</div>
<div class="a td" style="left:514.25px;top:704.25px">339</div>
<div class="a td" style="left:615.50px;top:704.25px">0,01</div>
<div class="a td" style="left:716.75px;top:704.25px">0,00</div>
<div class="a td" style="left:818.00px;top:704.25px">0,00</div>
<div class="a td" style="left:919.25px;top:704.25px">0,42</div>
<div class="a td" style="left:1020.50px;top:704.25px">0,00</div>
<div class="a td" style="left:1121.75px;top:704.25px">3,68</div>
<div class="a td" style="left:1223.00px;top:704.25px">-33,27</div>
<div class="a td" style="left:311.00px;top:730.50px">4</div>
<div class="a td" style="left:413.00px;top:730.50px">134</div>
<div class="a td" style="left:514.25px;top:730.50px">339</div>
<div class="a td" style="left:615.50px;top:730.50px">0,01</div>
<div class="a td" style="left:716.75px;top:730.50px">0,00</div>
<div class="a td" style="left:818.00px;top:730.50px">0,00</div>
<div class="a td" style="left:919.25px;top:730.50px">0,44</div>
<div class="a td" style="left:1020.50px;top:730.50px">0,00</div>
<div class="a td" style="left:1121.75px;top:730.50px">1,48</div>
<div class="a td" style="left:1223.00px;top:730.50px">0,00</div>
<div class="a td" style="left:311.00px;top:756.75px">5</div>
<div class="a td" style="left:413.00px;top:756.75px">135</div>
<div class="a td" style="left:514.25px;top:756.75px">339</div>
<div class="a td" style="left:615.50px;top:756.75px">0,02</div>
<div class="a td" style="left:716.75px;top:756.75px">0,01</div>
<div class="a td" style="left:818.00px;top:756.75px">0,00</div>
<div class="a td" style="left:919.25px;top:756.75px">0,43</div>
<div class="a td" style="left:1020.50px;top:756.75px">0,00</div>
<div class="a td" style="left:1121.75px;top:756.75px">-3,62</div>
<div class="a td" style="left:1223.00px;top:756.75px">-32,75</div>
<div class="a td" style="left:311.00px;top:783.00px">6</div>
<div class="a td" style="left:413.00px;top:783.00px">136</div>
<div class="a td" style="left:514.25px;top:783.00px">339</div>
<div class="a td" style="left:615.50px;top:783.00px">0,02</div>
<div class="a td" style="left:716.75px;top:783.00px">0,01</div>
<div class="a td" style="left:818.00px;top:783.00px">0,00</div>
<div class="a td" style="left:919.25px;top:783.00px">0,41</div>
<div class="a td" style="left:1020.50px;top:783.00px">-0,21</div>
<div class="a td" style="left:1121.75px;top:783.00px">-34,75</div>
<div class="a td" style="left:1223.00px;top:783.00px">0,00</div>
<div class="a td" style="left:311.00px;top:809.25px">7</div>
<div class="a td" style="left:413.00px;top:809.25px">137</div>
<div class="a td" style="left:514.25px;top:809.25px">340</div>
<div class="a td" style="left:615.50px;top:809.25px">0,02</div>
<div class="a td" style="left:716.75px;top:809.25px">0,01</div>
<div class="a td" style="left:818.00px;top:809.25px">0,00</div>
<div class="a td" style="left:919.25px;top:809.25px">0,21</div>
<div class="a td" style="left:1020.50px;top:809.25px">0,00</div>
<div class="a td" style="left:1121.75px;top:809.25px">1,08</div>
<div class="a td" style="left:1223.00px;top:809.25px">67,10</div>
<div class="a td" style="left:311.00px;top:835.50px">8</div>
<div class="a td" style="left:413.00px;top:835.50px">137</div>
<div class="a td" style="left:514.25px;top:835.50px">339</div>
<div class="a td" style="left:615.50px;top:835.50px">0,03</div>
<div class="a td" style="left:716.75px;top:835.50px">0,01</div>
<div class="a td" style="left:818.00px;top:835.50px">0,00</div>
<div class="a td" style="left:919.25px;top:835.50px">0,42</div>
<div class="a td" style="left:1020.50px;top:835.50px">0,21</div>
<div class="a td" style="left:1121.75px;top:835.50px">66,02</div>
<div class="a td" style="left:1223.00px;top:835.50px">-33,27</div>
<div class="a td" style="left:311.00px;top:861.75px">9</div>
<div class="a td" style="left:413.00px;top:861.75px">139</div>
<div class="a td" style="left:514.25px;top:861.75px">339</div>
<div class="a td" style="left:615.50px;top:861.75px">0,03</div>
<div class="a td" style="left:716.75px;top:861.75px">0,01</div>
<div class="a td" style="left:818.00px;top:861.75px">0,00</div>
<div class="a td" style="left:919.25px;top:861.75px">0,62</div>
<div class="a td" style="left:1020.50px;top:861.75px">-0,21</div>
<div class="a td" style="left:1121.75px;top:861.75px">-33,83</div>
<div class="a td" style="left:1223.00px;top:861.75px">-33,29</div>
<div class="a td" style="left:311.00px;top:888.00px">10</div>
<div class="a td" style="left:413.00px;top:888.00px">140</div>
<div class="a td" style="left:514.25px;top:888.00px">340</div>
<div class="a td" style="left:615.50px;top:888.00px">0,03</div>
<div class="a td" style="left:716.75px;top:888.00px">0,01</div>
<div class="a td" style="left:818.00px;top:888.00px">0,00</div>
<div class="a td" style="left:919.25px;top:888.00px">0,21</div>
<div class="a td" style="left:1020.50px;top:888.00px">0,00</div>
<div class="a td" style="left:1121.75px;top:888.00px">-29,13</div>
<div class="a td" style="left:1223.00px;top:888.00px">66,03</div>
<div class="a td" style="left:311.00px;top:914.25px">11</div>
<div class="a td" style="left:413.00px;top:914.25px">140</div>
<div class="a td" style="left:514.25px;top:914.25px">339</div>
<div class="a td" style="left:615.50px;top:914.25px">0,03</div>
<div class="a td" style="left:716.75px;top:914.25px">0,01</div>
<div class="a td" style="left:818.00px;top:914.25px">0,00</div>
<div class="a td" style="left:919.25px;top:914.25px">0,44</div>
<div class="a td" style="left:1020.50px;top:914.25px">0,21</div>
<div class="a td" style="left:1121.75px;top:914.25px">70,79</div>
<div class="a td" style="left:1223.00px;top:914.25px">0,00</div>
<div class="a td" style="left:311.00px;top:940.50px">12</div>
<div class="a td" style="left:413.00px;top:940.50px">142</div>
<div class="a td" style="left:514.25px;top:940.50px">339</div>
<div class="a td" style="left:615.50px;top:940.50px">0,04</div>
<div class="a td" style="left:716.75px;top:940.50px">0,01</div>
<div class="a td" style="left:818.00px;top:940.50px">0,00</div>
<div class="a td" style="left:919.25px;top:940.50px">0,65</div>
<div class="a td" style="left:1020.50px;top:940.50px">0,00</div>
<div class="a td" style="left:1121.75px;top:940.50px">-36,42</div>
<div class="a td" style="left:1223.00px;top:940.50px">-33,82</div>
<div class="a td" style="left:311.00px;top:966.75px">13</div>
<div class="a td" style="left:413.00px;top:966.75px">143</div>
<div class="a td" style="left:514.25px;top:966.75px">339</div>
<div class="a td" style="left:615.50px;top:966.75px">0,04</div>
<div class="a td" style="left:716.75px;top:966.75px">0,02</div>
<div class="a td" style="left:818.00px;top:966.75px">0,00</div>
<div class="a td" style="left:919.25px;top:966.75px">0,21</div>
<div class="a td" style="left:1020.50px;top:966.75px">0,00</div>
<div class="a td" style="left:1121.75px;top:966.75px">-37,50</div>
<div class="a td" style="left:1223.00px;top:966.75px">0,00</div>
<div class="a td" style="left:311.00px;top:993.00px">14</div>
<div class="a td" style="left:413.00px;top:993.00px">143</div>
<div class="a td" style="left:514.25px;top:993.00px">339</div>
<div class="a td" style="left:615.50px;top:993.00px">0,04</div>
<div class="a td" style="left:716.75px;top:993.00px">0,02</div>
<div class="a td" style="left:818.00px;top:993.00px">0,00</div>
<div class="a td" style="left:919.25px;top:993.00px">0,41</div>
<div class="a td" style="left:1020.50px;top:993.00px">0,00</div>
<div class="a td" style="left:1121.75px;top:993.00px">32,22</div>
<div class="a td" style="left:1223.00px;top:993.00px">0,00</div>
<!-- TASKBAR -->
<div class="a" style="left:0;top:1032px;width:1920px;height:48px;border-top:1px solid #A89060;background:linear-gradient(90deg,#C58F30 0%,#C28A2E 25%,#BE8030 40%,#B87430 49%)"></div>
<svg style="left:0;top:1032px" width="1920" height="48" viewBox="0 1032 1920 48">
 <defs>
  <linearGradient id="gA" x1="0" x2="1" y1="0" y2="0"><stop offset="0" stop-color="#C6962F"/><stop offset="0.6" stop-color="#C3902F"/><stop offset="0.8" stop-color="#BB7E2E"/><stop offset="1" stop-color="#B6722E"/></linearGradient>
  <linearGradient id="gT" x1="0" x2="1" y1="0" y2="0"><stop offset="0" stop-color="#C4A878"/><stop offset="0.8" stop-color="#C0A476"/><stop offset="1" stop-color="#C8AE80"/></linearGradient>
 </defs>
 <rect x="0" y="1032" width="944" height="48" fill="url(#gA)"/><rect x="0" y="1032" width="1920" height="1" fill="#B09868"/>
 <path d="M943 1032 L1058 1032 L1067 1080 L937 1080 Z" fill="#A57F3D"/>
 <path d="M1058 1032 L1672 1032 L1772 1080 L1067 1080 Z" fill="url(#gT)"/>
 <path d="M1672 1032 L1920 1032 L1920 1080 L1772 1080 Z" fill="#D0A13A"/>
 <!-- active buttons -->
 <rect x="62.5" y="1033.5" width="63.5" height="46" fill="rgba(255,240,210,0.15)" stroke="rgba(255,240,210,0.55)" stroke-width="1"/>
 <rect x="127" y="1033.5" width="4" height="46" fill="rgba(255,240,210,0.15)" stroke="rgba(255,240,210,0.55)" stroke-width="1"/>
 <rect x="207.5" y="1033.5" width="69.5" height="46" fill="rgba(255,240,210,0.15)" stroke="rgba(255,240,210,0.55)" stroke-width="1"/>
 <rect x="500.5" y="1033.5" width="68" height="46" fill="rgba(255,245,225,0.45)" stroke="rgba(255,250,235,0.9)" stroke-width="1.2"/>
 <!-- windows logo -->
 <g fill="#fff"><path d="M13.5 1042.7 L27.5 1040.7 V1055 H13.5 Z"/><path d="M29 1040.5 L46 1038.2 V1055 H29 Z"/><path d="M13.5 1056.5 H27.5 V1070.7 L13.5 1068.7 Z"/><path d="M29 1056.5 H46 V1073.2 L29 1070.9 Z"/></g>
 <!-- explorer -->
 <path d="M76 1044 L77 1040 H92 L94 1043 H112 V1071 H76 Z" fill="#E8C860"/>
 <rect x="80" y="1038.5" width="11" height="4" fill="#F8F8F8"/><rect x="89" y="1041" width="10" height="4" fill="#F8F8F8"/><rect x="100" y="1043" width="9" height="4" fill="#F8F8F8"/>
 <rect x="80" y="1038.5" width="2" height="3" fill="#2A2"/><rect x="89" y="1041" width="2" height="3" fill="#D22"/><rect x="100" y="1043" width="2" height="3" fill="#28C"/>
 <path d="M75.5 1046 H112.5 V1071 Q112.5 1072 111.5 1072 H76.5 Q75.5 1072 75.5 1071 Z" fill="#F4DC80"/>
 <path d="M80 1061 Q80 1059 82 1059 H107 Q109 1059 109 1061 V1074.5 H100 V1068 H88 V1074.5 H79.5 Z" fill="#6EC0EC"/>
 <path d="M80 1061 Q80 1059 82 1059 H107 Q109 1059 109 1061 V1064 H80 Z" fill="#9ED8F4"/>
 <!-- firefox -->
 <circle cx="169" cy="1055" r="17.8" fill="#E8581E"/>
 <circle cx="172.5" cy="1053" r="14.5" fill="#1A4EA8"/>
 <circle cx="174" cy="1049.5" r="10" fill="#2E88D4"/><circle cx="175" cy="1047" r="6" fill="#48B0EC"/>
 <path d="M155 1046 C158 1042 162 1040 167 1040 C163 1045 161 1050 162 1055 C164 1063 175 1066 182 1060 C185 1056 186 1051 186.5 1048 C188 1059 184 1068 174 1072 C163 1075 152 1067 151.5 1057 C151 1053 153 1049 155 1046 Z" fill="#EE6A1E"/>
 <path d="M181 1042 C186 1047 188 1054 186 1062 C184 1068 180 1071 176 1072 C182 1066 185 1057 183 1049 Z" fill="#FFC02A"/>
 <path d="M161 1043 C164 1040 168 1040 170 1042 C167 1044 166 1046 165.5 1049 Z" fill="#F8A020"/>
 <!-- word -->
 <rect x="234" y="1044" width="26" height="24" fill="#fff" stroke="#2B579A" stroke-width="2"/>
 <path d="M244 1048 h13 M244 1052 h13 M244 1056 h13 M244 1060 h13 M244 1064 h13" stroke="#2B579A" stroke-width="1.6"/>
 <path d="M223 1043 L246 1039 V1073 L223 1069 Z" fill="#2B579A"/>
 <text x="226.5" y="1063.5" font-family="Liberation Sans" font-weight="bold" font-size="15" fill="#fff">W</text>
 <!-- powerpoint -->
 <rect x="306" y="1044" width="26" height="24" fill="#fff" stroke="#D24726" stroke-width="2"/>
 <circle cx="322" cy="1053" r="5" fill="#D24726"/>
 <path d="M316 1061h13M316 1064.5h13" stroke="#D24726" stroke-width="1.6"/>
 <path d="M297 1043 L319 1039 V1073 L297 1069 Z" fill="#D24726"/>
 <text x="301.5" y="1063.5" font-family="Liberation Sans" font-weight="bold" font-size="16" fill="#fff">P</text>
 <!-- excel -->
 <rect x="381" y="1044" width="26" height="24" fill="#fff" stroke="#207245" stroke-width="2"/>
 <path d="M389 1048h16M389 1052h16M389 1056h16M389 1060h16M389 1064h16M397 1045v22" stroke="#207245" stroke-width="1.5"/>
 <path d="M371 1043 L393 1039 V1073 L371 1069 Z" fill="#207245"/>
 <text x="374.5" y="1063.5" font-family="Liberation Sans" font-weight="bold" font-size="16" fill="#fff">X</text>
 <!-- lock tool -->
 <path d="M441 1054h40M461 1044v32" stroke="#8EE02A" stroke-width="3"/>
 <path d="M454.5 1047 V1043 A6.5 6.5 0 0 1 467.5 1043 V1047" fill="none" stroke="#E0B020" stroke-width="2.5"/>
 <rect x="451" y="1047" width="20" height="15" rx="1" fill="#F2C42C" stroke="#B88A10" stroke-width="1"/>
 <path d="M452 1051h18M452 1055h18M452 1059h18" stroke="#D8A818" stroke-width="1"/>
 <!-- measure dynamics app -->
 <rect x="514" y="1037" width="38" height="38" fill="#ECECEC"/>
 <path d="M519 1072 V1053 C519 1047 527 1045 532 1048 C537 1044 546 1046 546 1053 V1066 H540 V1055 C540 1052 536 1052 536 1055 V1069 H529.5 V1055.5 C529.5 1053 525.5 1053 525.5 1055.5 V1072 Z" fill="#6C6C6C"/>
 <path d="M519 1053 C519 1047 527 1045 532 1048 C537 1044 546 1046 546 1053 V1055 H540 C540 1052 536 1052 536 1055 H529.5 C529.5 1053 525.5 1053 525.5 1055.5 H519 Z" fill="#8A8A8A"/>
 <path d="M526 1070 C536 1076 548 1072 551 1058 L547 1058 L553 1050 L556 1058 L553 1058 C550 1076 534 1078 526 1070 Z" fill="#3A9AD8"/>
 <rect x="551" y="1038" width="3" height="9" fill="#6AB0E0"/><rect x="551" y="1047" width="3" height="9" fill="#E8A030"/><rect x="551" y="1056" width="3" height="9" fill="#9CC040"/><rect x="551" y="1065" width="3" height="9" fill="#E06070"/>
 <!-- tray -->
 <path d="M1673 1061 L1678.5 1055.5 L1684 1061 Z" fill="#F4F4F4"/>
 <path d="M1700 1047 V1067" stroke="#F6F6F6" stroke-width="1.6"/><path d="M1701 1047.5 C1704 1046 1707 1049 1712 1047.5 V1055 C1707 1056.5 1704 1053.5 1701 1055 Z" fill="#F6F6F6"/>
 <circle cx="1712" cy="1062.5" r="4.3" fill="#E22"/><path d="M1710 1060.5l4 4M1714 1060.5l-4 4" stroke="#fff" stroke-width="1.2"/>
 <path d="M1731 1050v7M1735 1050v7M1729.5 1056h7v4h-7zM1733 1060v7" stroke="#F4F4F4" stroke-width="1.6" fill="none"/>
 <rect x="1739" y="1049" width="8" height="17" rx="1" fill="none" stroke="#F4F4F4" stroke-width="1.8"/>
 <path d="M1759.5 1066v-2M1763 1066v-5M1766.5 1066v-8M1770 1066v-11M1773.5 1066v-14" stroke="#F4F4F4" stroke-width="1.8"/>
 <path d="M1789 1054 H1793 L1798 1049 V1068 L1793 1063 H1789 Z" fill="#F4F4F4"/>
 <circle cx="1801.5" cy="1063.5" r="4.5" fill="#E22"/><path d="M1798.5 1066.5l6-6" stroke="#fff" stroke-width="1.5"/>
</svg>
<div class="a" style="left:1847.5px;top:1039px;font-size:14.5px;color:#F8F8F8">12:17</div>
<div class="a" style="left:1829px;top:1061px;font-size:14.5px;color:#F8F8F8">22.03.2016</div>
</body></html>
